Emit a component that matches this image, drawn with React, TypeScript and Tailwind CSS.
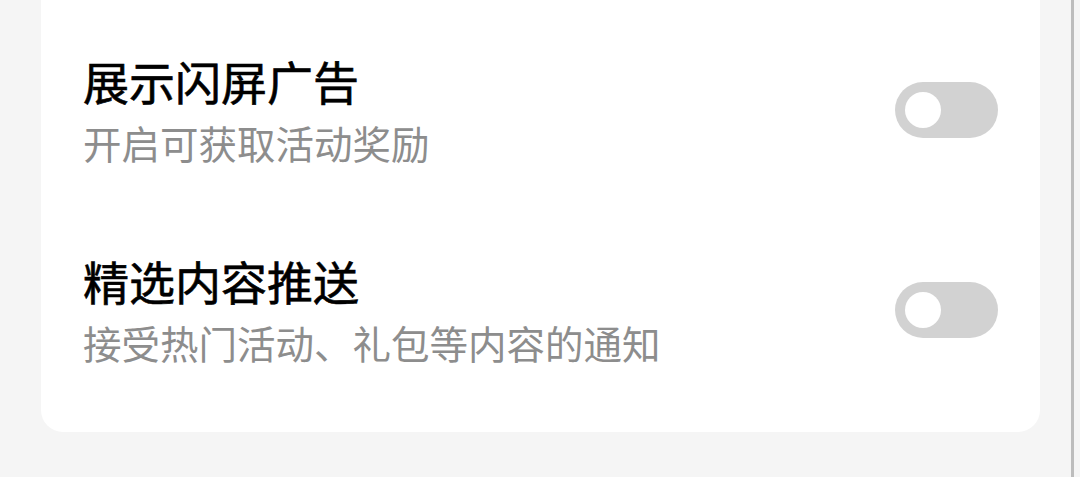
import React from "react";

function Toggle() {
  return (
    <div className="flex h-[56px] w-[103px] shrink-0 items-center rounded-full bg-[#d2d2d2] pl-[10px]">
      <div className="h-[36px] w-[36px] rounded-full bg-white" />
    </div>
  );
}

function Row({ title, desc }: { title: string; desc: string }) {
  return (
    <div className="flex items-center justify-between">
      <div className="flex flex-col">
        <div className="text-[46px] leading-[64px] font-normal text-[#000000] [-webkit-text-stroke:0.6px_#000]">{title}</div>
        <div className="text-[38.5px] leading-[60px] text-[#8d8d8d]">{desc}</div>
      </div>
      <Toggle />
    </div>
  );
}

export default function App() {
  return (
    <div
      className="relative h-[477px] w-[1080px] overflow-hidden bg-[#f5f5f5]"
      style={{ fontFamily: '"Noto Sans CJK SC", "Noto Sans", sans-serif' }}
    >
      <div className="ml-[41px] flex w-[999px] flex-col gap-[76px] rounded-b-[22px] bg-white pt-[48px] pb-[60px] pl-[42px] pr-[42px]">
        <Row title="展示闪屏广告" desc="开启可获取活动奖励" />
        <Row title="精选内容推送" desc="接受热门活动、礼包等内容的通知" />
      </div>
      <div className="absolute right-[6px] top-0 h-full w-[3px] bg-[#bdbdbd]" />
    </div>
  );
}
